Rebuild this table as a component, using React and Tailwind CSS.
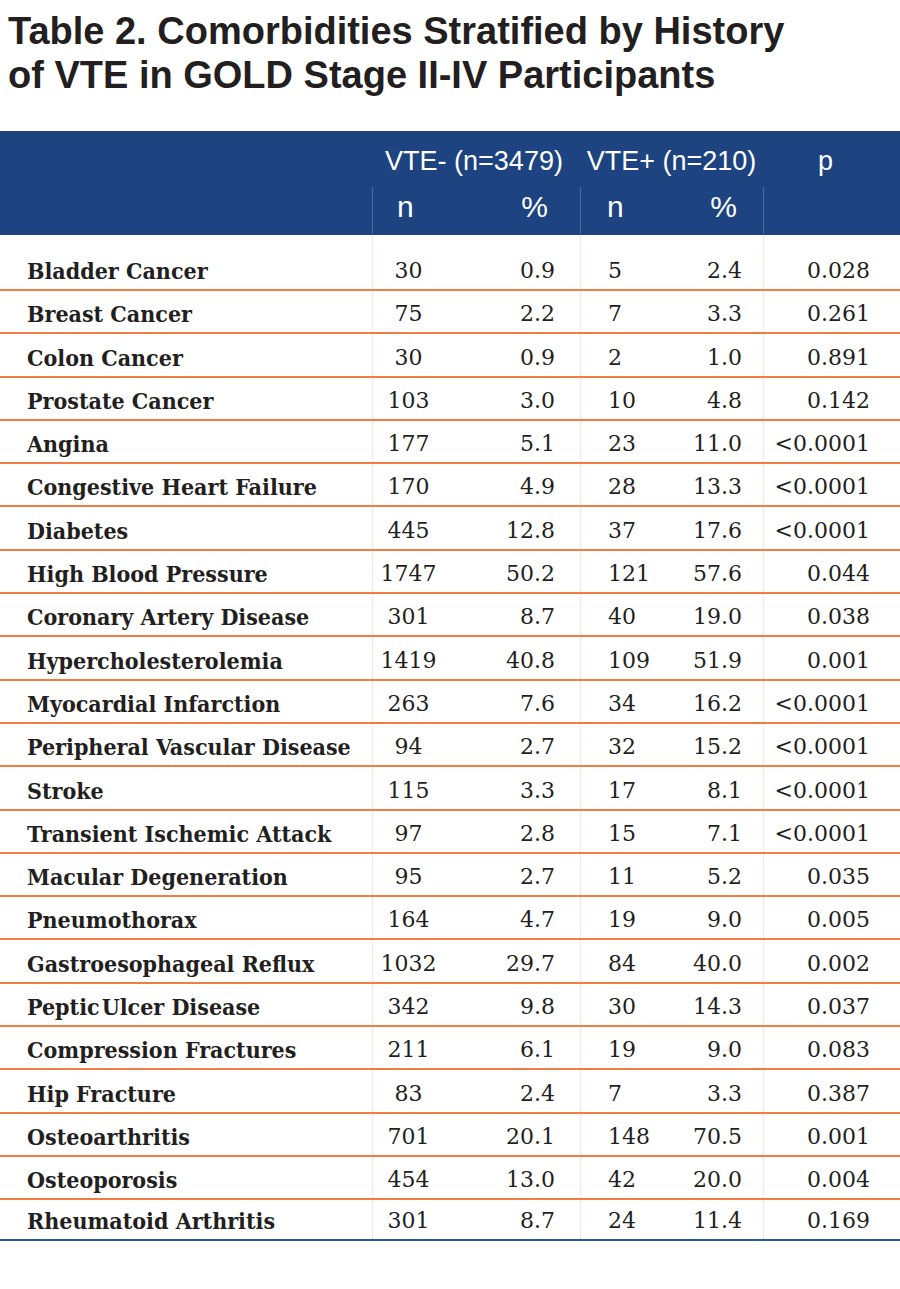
const rows = [
  ['Bladder Cancer', '30', '0.9', '5', '2.4', '0.028'],
  ['Breast Cancer', '75', '2.2', '7', '3.3', '0.261'],
  ['Colon Cancer', '30', '0.9', '2', '1.0', '0.891'],
  ['Prostate Cancer', '103', '3.0', '10', '4.8', '0.142'],
  ['Angina', '177', '5.1', '23', '11.0', '<0.0001'],
  ['Congestive Heart Failure', '170', '4.9', '28', '13.3', '<0.0001'],
  ['Diabetes', '445', '12.8', '37', '17.6', '<0.0001'],
  ['High Blood Pressure', '1747', '50.2', '121', '57.6', '0.044'],
  ['Coronary Artery Disease', '301', '8.7', '40', '19.0', '0.038'],
  ['Hypercholesterolemia', '1419', '40.8', '109', '51.9', '0.001'],
  ['Myocardial Infarction', '263', '7.6', '34', '16.2', '<0.0001'],
  ['Peripheral Vascular Disease', '94', '2.7', '32', '15.2', '<0.0001'],
  ['Stroke', '115', '3.3', '17', '8.1', '<0.0001'],
  ['Transient Ischemic Attack', '97', '2.8', '15', '7.1', '<0.0001'],
  ['Macular Degeneration', '95', '2.7', '11', '5.2', '0.035'],
  ['Pneumothorax', '164', '4.7', '19', '9.0', '0.005'],
  ['Gastroesophageal Reflux', '1032', '29.7', '84', '40.0', '0.002'],
  ['Peptic\u200aUlcer Disease', '342', '9.8', '30', '14.3', '0.037'],
  ['Compression Fractures', '211', '6.1', '19', '9.0', '0.083'],
  ['Hip Fracture', '83', '2.4', '7', '3.3', '0.387'],
  ['Osteoarthritis', '701', '20.1', '148', '70.5', '0.001'],
  ['Osteoporosis', '454', '13.0', '42', '20.0', '0.004'],
  ['Rheumatoid Arthritis', '301', '8.7', '24', '11.4', '0.169'],
];

const label = "font-['DejaVu_Serif_Condensed','DejaVu_Serif',serif] font-bold text-[23px] leading-[22px]";
const num = "font-['DejaVu_Serif',serif] text-[22px] leading-[22px]";
const cell = 'flex items-end pb-[7px]';

function Row({ r, i, last }) {
  const height = i === 0 ? 'h-[56px]' : last ? 'h-[41px]' : 'h-[43.3px]';
  const border = last ? 'border-b-2 border-[#2a58a5]' : 'border-b-2 border-[#f47b44]';
  return (
    <div className={`flex ${height} ${border} text-[#231f20]`}>
      <div className={`${cell} w-[372px] pl-[27px] ${label}`}>{r[0]}</div>
      <div className={`${cell} w-[72px] justify-center border-l border-[#fde3d8] ${num}`}>{r[1]}</div>
      <div className={`${cell} w-[136px] justify-end pr-[25px] ${num}`}>{r[2]}</div>
      <div className={`${cell} w-[100px] pl-[27px] border-l border-[#fde3d8] ${num}`}>{r[3]}</div>
      <div className={`${cell} w-[83px] justify-end pr-[21px] ${num}`}>{r[4]}</div>
      <div className={`${cell} flex-1 justify-end pr-[30px] border-l border-[#fde3d8] ${num}`}>{r[5]}</div>
    </div>
  );
}

export default function App() {
  return (
    <div className="w-[900px] h-[1289px] bg-white">
      {/* title */}
      <h1 className="pt-[9px] pl-[8px] font-['Liberation_Sans',Arial,sans-serif] font-bold text-[38px] leading-[44px] text-[#231f20]">
        Table 2. Comorbidities Stratified by History
        <br />
        of VTE in GOLD Stage II-IV Participants
      </h1>

      {/* header bar */}
      <div className="mt-[34px] h-[104px] bg-[#1d4380] text-white font-['Liberation_Sans',Arial,sans-serif]">
        <div className="flex h-[56px] items-start pt-[17px] text-[27px] leading-[27px]">
          <div className="w-[372px]" />
          <div className="w-[208px] text-center pr-[4px]">VTE- (n=3479)</div>
          <div className="w-[183px] text-center">VTE+ (n=210)</div>
          <div className="flex-1 text-center pr-[12px]">p</div>
        </div>
        <div className="flex h-[48px] text-[30px] leading-[30px]">
          <div className="w-[372px]" />
          <div className="flex w-[208px] justify-between pl-[24px] pr-[32px] pt-[5px] border-l border-[#4b6a9e]">
            <span>n</span>
            <span>%</span>
          </div>
          <div className="flex w-[183px] justify-between pl-[26px] pr-[26px] pt-[5px] border-l border-[#4b6a9e]">
            <span>n</span>
            <span>%</span>
          </div>
          <div className="flex-1 border-l border-[#4b6a9e]" />
        </div>
      </div>

      {/* body */}
      <div>
        {rows.map((r, i) => (
          <Row key={r[0]} r={r} i={i} last={i === rows.length - 1} />
        ))}
      </div>
    </div>
  );
}
